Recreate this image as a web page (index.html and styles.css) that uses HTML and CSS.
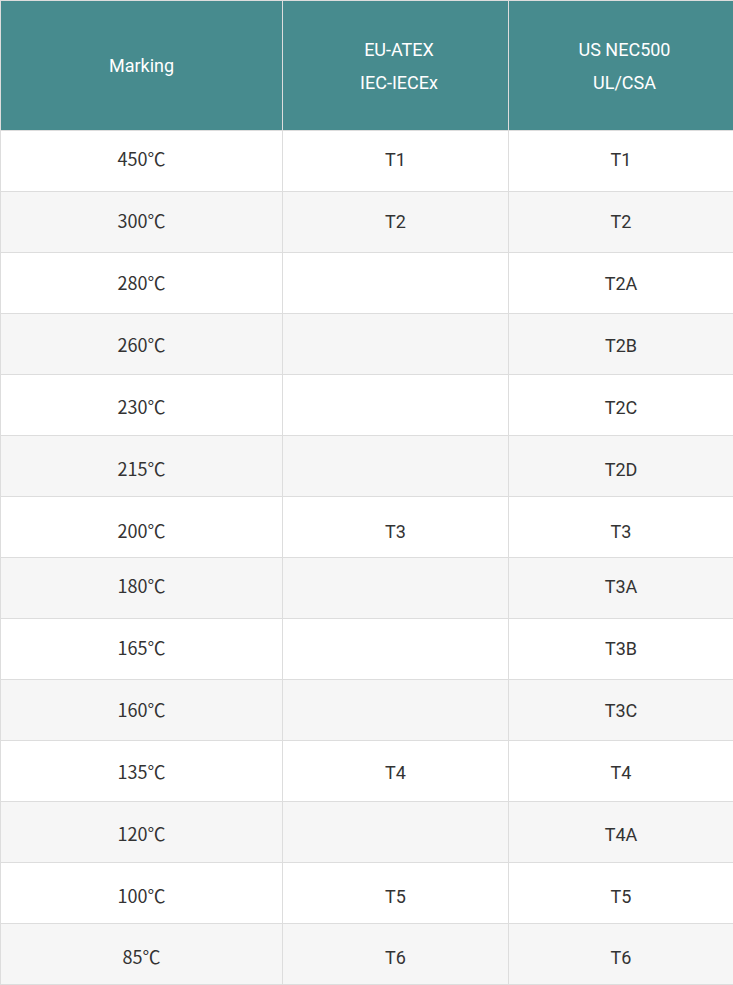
FILE: index.html
```html
<!DOCTYPE html>
<html>
<head>
<meta charset="utf-8">
<link rel="stylesheet" href="styles.css">
</head>
<body>
<table class="temp-table">
  <colgroup>
    <col class="col-a">
    <col class="col-b">
    <col class="col-c">
  </colgroup>
  <thead>
    <tr>
      <th>Marking</th>
      <th class="std">EU-ATEX<br>IEC-IECEx</th>
      <th class="std">US NEC500<br>UL/CSA</th>
    </tr>
  </thead>
  <tbody>
    <tr><td class="temp">450℃</td><td>T1</td><td>T1</td></tr>
    <tr><td class="temp">300℃</td><td>T2</td><td>T2</td></tr>
    <tr><td class="temp">280℃</td><td></td><td>T2A</td></tr>
    <tr><td class="temp">260℃</td><td></td><td>T2B</td></tr>
    <tr><td class="temp">230℃</td><td></td><td>T2C</td></tr>
    <tr><td class="temp">215℃</td><td></td><td>T2D</td></tr>
    <tr><td class="temp">200℃</td><td>T3</td><td>T3</td></tr>
    <tr><td class="temp">180℃</td><td></td><td>T3A</td></tr>
    <tr><td class="temp">165℃</td><td></td><td>T3B</td></tr>
    <tr><td class="temp">160℃</td><td></td><td>T3C</td></tr>
    <tr><td class="temp">135℃</td><td>T4</td><td>T4</td></tr>
    <tr><td class="temp">120℃</td><td></td><td>T4A</td></tr>
    <tr><td class="temp">100℃</td><td>T5</td><td>T5</td></tr>
    <tr><td class="temp">85℃</td><td>T6</td><td>T6</td></tr>
  </tbody>
</table>
</body>
</html>
```
FILE: styles.css
```css
html, body {
  margin: 0;
  padding: 0;
  background: #fff;
}

.temp-table {
  width: 733px;
  border-collapse: collapse;
  table-layout: fixed;
  font-family: Roboto, "Noto Sans CJK SC", sans-serif;
  font-size: 18px;
  color: #333;
}

.col-a { width: 282px; }
.col-b { width: 226px; }
.col-c { width: 225px; }

.temp-table th,
.temp-table td {
  border: 1px solid #dddddd;
  text-align: center;
  vertical-align: middle;
  padding: 0;
}

.temp-table th {
  background: #478b8e;
  color: #fff;
  font-weight: 400;
  height: 129px;
  line-height: 33px;
}

.temp-table th.std {
  padding-left: 7px;
}

.temp-table tbody tr {
  --pt: 0px;
  --pb: 0px;
}

.temp-table td {
  line-height: 20px;
  padding-top: var(--pt);
  padding-bottom: var(--pb);
  height: calc(60px - var(--pt) - var(--pb));
}

.temp-table tbody tr:nth-child(even) td {
  background: #f6f6f6;
}

.temp-table td.temp {
  font-family: "Noto Sans CJK SC", sans-serif;
  font-size: 18px;
  padding-bottom: calc(var(--pb) + 4px);
  height: calc(56px - var(--pt) - var(--pb));
}

/* text baseline drifts slightly within each group of seven rows */
.temp-table tbody tr:nth-child(7n+1) { --pb: 3px; }
.temp-table tbody tr:nth-child(7n+2) { --pb: 1px; }
.temp-table tbody tr:nth-child(7n+3) { --pt: 1px; }
.temp-table tbody tr:nth-child(7n+4) { --pt: 3px; }
.temp-table tbody tr:nth-child(7n+5) { --pt: 5px; }
.temp-table tbody tr:nth-child(7n+6) { --pt: 7px; }
.temp-table tbody tr:nth-child(7n) { --pt: 9px; }
.temp-table tbody tr:last-child { --pt: 8px; }
```
